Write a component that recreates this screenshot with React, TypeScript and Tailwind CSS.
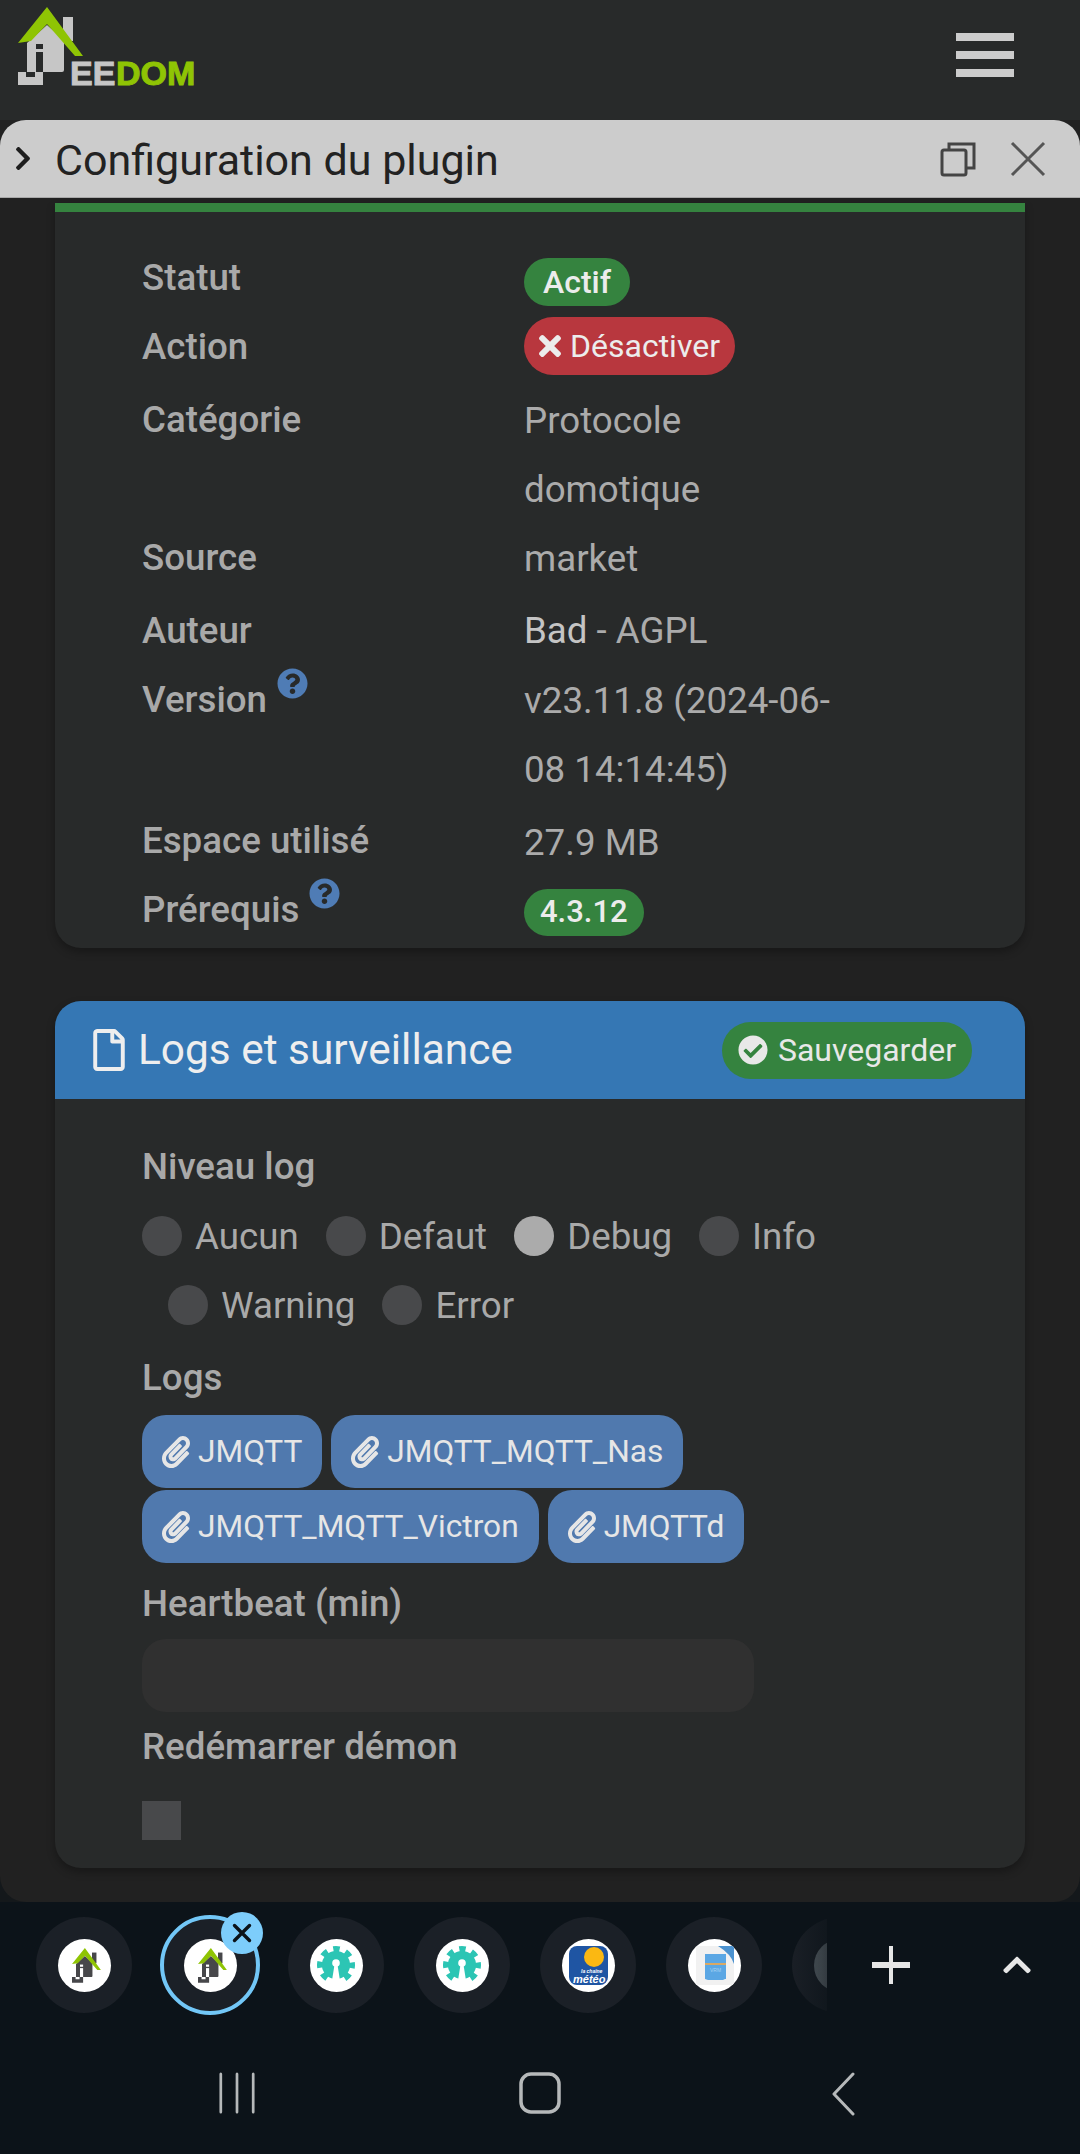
import { FaCheckCircle, FaChevronRight, FaChevronUp, FaPaperclip, FaQuestionCircle, FaRegFile, FaTimes } from 'react-icons/fa';

function HouseShapes({ body, bg }: { body: string; bg: string }) {
  return (
    <g>
      <rect x="63" y="17" width="10" height="24" fill={body} />
      <path d="M27 43 47 25 64 40V70q0 2-2 2H27z" fill={body} />
      <rect x="36" y="44" width="7" height="5" fill={bg} />
      <rect x="36" y="52" width="7" height="24" fill={bg} />
      <path d="M18 72h8v5h9v-5h8v13H18z" fill={body} />
      <path d="M47 7 83 56H75L47 24 31 41 18 43z" fill="#8fc404" />
    </g>
  );
}

function HouseMark() {
  return (
    <svg viewBox="0 0 90 90" className="w-[40px] h-[40px]">
      <HouseShapes body="#47474a" bg="#ffffff" />
    </svg>
  );
}

function Logo() {
  return (
    <svg viewBox="0 0 200 100" className="w-[200px] h-[100px]">
      <HouseShapes body="#c6c6c6" bg="#282a2a" />
      <text x="70" y="85" fontFamily="Liberation Sans" fontWeight="700" fontSize="34" stroke="#c6c6c6" strokeWidth="1" fill="#c6c6c6">EE</text>
      <text x="116" y="85" fontFamily="Liberation Sans" fontWeight="700" fontSize="34" stroke="#8fc404" strokeWidth="1" fill="#8fc404">DOM</text>
    </svg>
  );
}

function Gear() {
  return (
    <svg viewBox="0 0 100 100" className="w-[38px] h-[38px]">
      <circle cx="50" cy="50" r="40" fill="none" stroke="#2cc5b4" strokeWidth="20" strokeDasharray="16 15.4" strokeDashoffset="8" />
      <circle cx="50" cy="50" r="37" fill="#2cc5b4" />
      <circle cx="50" cy="45" r="10" fill="#fff" />
      <path d="M46 50h8l8 50H38z" fill="#fff" />
    </svg>
  );
}

function Meteo() {
  return (
    <svg viewBox="0 0 53 53" className="w-[53px] h-[53px]">
      <rect x="7" y="7" width="39" height="39" rx="8" fill="#1f55a3" />
      <circle cx="32" cy="18" r="10" fill="#fbb812" />
      <text x="19" y="34" fontFamily="Liberation Sans" fontStyle="italic" fontWeight="700" fontSize="5" fill="#fff">la chaîne</text>
      <text x="11" y="44" fontFamily="Liberation Sans" fontStyle="italic" fontWeight="700" fontSize="11" fill="#fff">météo</text>
    </svg>
  );
}

function Vrm() {
  return (
    <svg viewBox="0 0 53 53" className="w-[53px] h-[53px]">
      <rect x="8" y="7" width="38" height="39" rx="3" fill="#f1f1f1" />
      <path d="M17 15h21v25H37l-2 1H20l-3-1z" fill="#5ba7e4" />
      <rect x="17" y="24" width="21" height="2" fill="#d9a864" />
      <path d="M30 7h16v18q-3-10-16-18z" fill="#4c93d0" />
      <text x="22" y="33" fontFamily="Liberation Sans" fontSize="5" fill="#a8d2f2">VRM</text>
    </svg>
  );
}

function Row({ label, help, labelClass, children, className }: { label: string; help?: boolean; labelClass: string; children: React.ReactNode; className: string }) {
  return (
    <div className={`flex items-start ${className}`}>
      <div className={`w-[382px] flex items-start font-medium text-[#a9a9a9] ${labelClass}`}>
        {label}
        {help && (
          <span className="ml-[10px] text-[#4f7cb5] text-[31px] leading-none">
            <FaQuestionCircle />
          </span>
        )}
      </div>
      <div className="flex-1 flex flex-col items-start">{children}</div>
    </div>
  );
}

function Radio({ label, checked }: { label: string; checked?: boolean }) {
  return (
    <div className="flex items-center mr-[27px]">
      <span className={`w-[40px] h-[40px] rounded-full ${checked ? 'bg-[#ababab]' : 'bg-[#48494b]'}`} />
      <span className="ml-[13px]">{label}</span>
    </div>
  );
}

function Chip({ label }: { label: string }) {
  return (
    <div className="h-[73px] rounded-[24px] bg-[#5079ae] text-[#e6e6e6] text-[31.7px] flex items-center pl-[20px] pr-[20px]">
      <FaPaperclip className="text-[32px] w-[28px] mr-[8px]" />
      {label}
    </div>
  );
}

function Tab({ active, children }: { active?: boolean; children: React.ReactNode }) {
  return (
    <div className="relative w-[96px] h-[96px] shrink-0 rounded-full bg-[#1b2027] flex items-center justify-center">
      <div className="w-[53px] h-[53px] rounded-full bg-white overflow-hidden flex items-center justify-center">{children}</div>
      {active && <div className="absolute -inset-[2px] rounded-full border-[4px] border-[#72c7f7]" />}
    </div>
  );
}

export default function App() {
  return (
    <div className="w-[1080px] h-[2154px] overflow-hidden flex flex-col bg-[#0c1319] font-[Roboto,sans-serif]">
      <header className="h-[120px] shrink-0 bg-[#282a2a] flex items-start justify-between pr-[66px]">
        <Logo />
        <div className="mt-[33px] w-[58px] flex flex-col gap-[10px]">
          <div className="h-[8px] bg-[#cccccc]" />
          <div className="h-[8px] bg-[#cccccc]" />
          <div className="h-[8px] bg-[#cccccc]" />
        </div>
      </header>

      <div className="bg-[#14181b]">
        <div className="rounded-b-[26px] bg-[#212121] overflow-hidden">
          <div className="h-[78px] rounded-t-[26px] bg-[#cccccc] border-b border-[#a8a8a8] flex items-center text-[#222] overflow-hidden">
            <FaChevronRight className="ml-[14px] text-[27px] w-[18px] text-[#1d1d1d]" />
            <span className="ml-[23px] pt-[3px] text-[43px]">Configuration du plugin</span>
            <svg viewBox="0 0 36 36" className="ml-auto w-[36px] h-[36px] text-[#444]" fill="none" stroke="currentColor" strokeWidth="3">
              <rect x="2" y="9" width="24" height="25" rx="2" />
              <path d="M9 8V3h25v24h-7" />
            </svg>
            <svg viewBox="0 0 36 36" className="ml-[34px] mr-[34px] w-[36px] h-[36px] text-[#555]" fill="none" stroke="currentColor" strokeWidth="3">
              <path d="M2 2 34 34M34 2 2 34" />
            </svg>
          </div>

          <div className="pt-[5px] px-[55px] pb-[34px]">
            <section className="bg-[#282a2a] rounded-b-[26px] shadow-[0_4px_8px_rgba(0,0,0,0.3)]">
              <div className="h-[9px] bg-[#35833f]" />
              <div className="pl-[87px] pt-[46px] pb-[12px] text-[36.7px] text-[#ababab]">
                <Row label="Statut" labelClass="leading-[40px]" className="h-[48px]">
                  <span className="inline-flex items-center h-[48px] px-[19px] rounded-full bg-[#35833f] text-[#ececec] font-medium text-[32px]">Actif</span>
                </Row>
                <Row label="Action" labelClass="leading-[60px]" className="h-[58px] mt-[11px]">
                  <span className="inline-flex items-center h-[58px] pl-[15px] pr-[15px] rounded-full bg-[#b8373e] text-[#ececec] text-[32px]">
                    <FaTimes className="text-[32px] w-[22px] mr-[9px]" />
                    Désactiver
                  </span>
                </Row>
                <Row label="Catégorie" labelClass="leading-[68px]" className="mt-[11px]">
                  <div className="leading-[69px] w-[340px]">Protocole domotique</div>
                </Row>
                <Row label="Source" labelClass="leading-[67px]" className="">
                  <div className="leading-[69px]">market</div>
                </Row>
                <Row label="Auteur" labelClass="leading-[70px]" className="mt-[3px]">
                  <div className="leading-[69px]">
                    <span className="text-[#c4c4c4]">Bad</span> - AGPL
                  </div>
                </Row>
                <Row label="Version" help labelClass="leading-[68px] [&>span]:mt-[2px]" className="">
                  <div className="leading-[69px] w-[340px]">v23.11.8 (2024-06-08 14:14:45)</div>
                </Row>
                <Row label="Espace utilisé" labelClass="leading-[66px]" className="mt-[4px]">
                  <div className="leading-[69px]">27.9 MB</div>
                </Row>
                <Row label="Prérequis" help labelClass="leading-[42px] [&>span]:-mt-[11px]" className="mt-[12px]">
                  <span className="inline-flex items-center h-[47px] px-[16px] rounded-full bg-[#35833f] text-[#ececec] font-medium text-[31px]">4.3.12</span>
                </Row>
              </div>
            </section>

            <section className="mt-[53px] bg-[#282a2a] rounded-[26px] shadow-[0_4px_8px_rgba(0,0,0,0.3)]">
              <div className="h-[98px] rounded-t-[26px] bg-[#3577b4] flex items-center pl-[38px] pr-[53px] text-[#eeeeee]">
                <FaRegFile className="text-[42px] w-[32px]" />
                <span className="ml-[13px] text-[42.4px]">Logs et surveillance</span>
                <div className="ml-auto h-[57px] rounded-full bg-[#35833f] flex items-center pl-[16px] pr-[16px] text-[32px] text-[#e8e8e8]">
                  <FaCheckCircle className="text-[30px] mr-[10px]" />
                  Sauvegarder
                </div>
              </div>
              <div className="pl-[87px] pb-[28px] text-[36.7px] text-[#a9a9a9]">
                <div className="pt-[45px] leading-[46px] font-medium">Niveau log</div>
                <div className="mt-[12px] flex h-[69px] items-center">
                  <Radio label="Aucun" />
                  <Radio label="Defaut" />
                  <Radio label="Debug" checked />
                  <Radio label="Info" />
                </div>
                <div className="flex h-[69px] items-center pl-[26px]">
                  <Radio label="Warning" />
                  <Radio label="Error" />
                </div>
                <div className="mt-[15px] leading-[46px] font-medium">Logs</div>
                <div className="mt-[14px] flex flex-wrap gap-x-[9px] gap-y-[2px] w-[640px]">
                  <Chip label="JMQTT" />
                  <Chip label="JMQTT_MQTT_Nas" />
                  <Chip label="JMQTT_MQTT_Victron" />
                  <Chip label="JMQTTd" />
                </div>
                <div className="mt-[18px] leading-[46px] font-medium">Heartbeat (min)</div>
                <div className="mt-[12px] w-[612px] h-[73px] rounded-[24px] bg-[#303030]" />
                <div className="mt-[12px] leading-[46px] font-medium">Redémarrer démon</div>
                <div className="mt-[31px] w-[39px] h-[39px] bg-[#48494b]" />
              </div>
            </section>
          </div>
        </div>
      </div>

      <div className="relative flex items-start pt-[15px] h-[111px] shrink-0">
        <div className="relative w-[827px] h-[111px] -mt-[8px] pt-[8px] overflow-hidden flex gap-[30px] pl-[36px] shrink-0">
          <Tab>
            <HouseMark />
          </Tab>
          <Tab active>
            <HouseMark />
          </Tab>
          <Tab>
            <Gear />
          </Tab>
          <Tab>
            <Gear />
          </Tab>
          <Tab>
            <Meteo />
          </Tab>
          <Tab>
            <Vrm />
          </Tab>
          <Tab>
            <div className="w-full h-full bg-[linear-gradient(90deg,#6b757b,#c4c9cb_60%,#555)]" />
          </Tab>
          <div className="absolute right-0 top-0 bottom-0 w-[40px] bg-[linear-gradient(90deg,rgba(12,19,25,0),rgba(12,19,25,0.7))]" />
        </div>
        <div className="absolute left-[221px] top-[10px] w-[42px] h-[42px] rounded-full bg-[#7dcdfb] flex items-center justify-center">
          <svg viewBox="0 0 20 20" className="w-[20px] h-[20px]" fill="none" stroke="#0c1319" strokeWidth="3.4" strokeLinecap="round">
            <path d="M2.5 2.5 17.5 17.5M17.5 2.5 2.5 17.5" />
          </svg>
        </div>
        <div className="w-[127px] h-[96px] flex items-center justify-center">
          <div className="relative w-[38px] h-[38px] flex items-center justify-center">
            <div className="w-[38px] h-[6px] bg-[#e6e6e6]" />
            <div className="absolute w-[4px] h-[38px] bg-[#e6e6e6]" />
          </div>
        </div>
        <div className="w-[126px] h-[96px] flex items-center justify-center">
          <FaChevronUp className="text-[32px] text-[#e6e6e6]" />
        </div>
      </div>

      <nav className="flex justify-center pt-[59px]">
        <div className="w-[303px] flex justify-center">
          <svg viewBox="0 0 40 42" className="w-[36px] h-[42px]" preserveAspectRatio="none" fill="none" stroke="#b6b9ba" strokeWidth="3" strokeLinecap="round">
            <path d="M2 2V40M20 2V40M38 2V40" />
          </svg>
        </div>
        <div className="w-[303px] flex justify-center">
          <svg viewBox="0 0 42 42" className="w-[42px] h-[42px]" fill="none" stroke="#b6b9ba" strokeWidth="3.5">
            <rect x="2" y="2" width="38" height="38" rx="10" />
          </svg>
        </div>
        <div className="w-[303px] flex justify-center">
          <svg viewBox="0 0 24 44" className="w-[24px] h-[44px]" fill="none" stroke="#b6b9ba" strokeWidth="3" strokeLinecap="round" strokeLinejoin="round">
            <path d="M22 2 3 22 22 42" />
          </svg>
        </div>
      </nav>
    </div>
  );
}
